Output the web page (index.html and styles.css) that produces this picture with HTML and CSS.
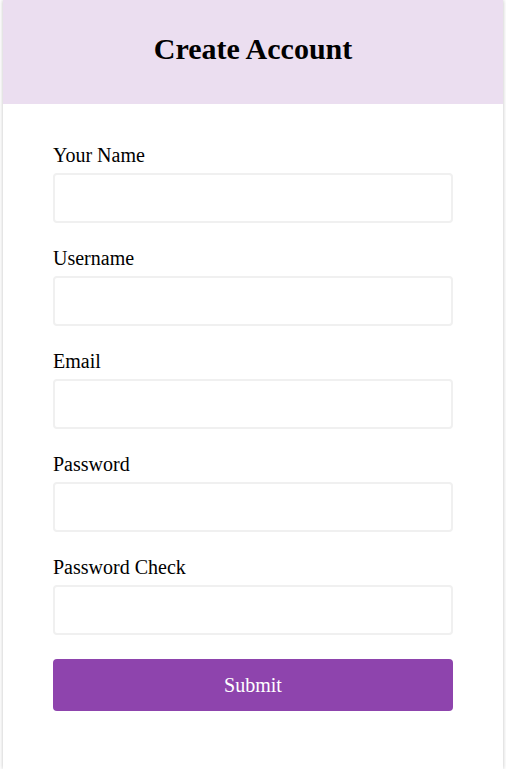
FILE: index.html
```html
<!DOCTYPE html>
<html>
<head>
<meta charset="utf-8">
<link rel="stylesheet" href="styles.css">
</head>
<body>
<div class="card">
  <div class="card-header">
    <h2 class="title">Create Account</h2>
  </div>
  <form class="form">
    <div class="field">
      <label class="label">Your Name</label>
      <input class="input" type="text">
    </div>
    <div class="field">
      <label class="label">Username</label>
      <input class="input" type="text">
    </div>
    <div class="field">
      <label class="label">Email</label>
      <input class="input" type="text">
    </div>
    <div class="field">
      <label class="label">Password</label>
      <input class="input" type="password">
    </div>
    <div class="field">
      <label class="label">Password Check</label>
      <input class="input" type="password">
    </div>
    <button class="submit" type="button">Submit</button>
  </form>
</div>
</body>
</html>
```
FILE: styles.css
```css
html, body {
  margin: 0;
  padding: 0;
  background: #ffffff;
  font-family: "Liberation Serif", "Times New Roman", serif;
}
.card {
  box-sizing: border-box;
  width: 500px;
  margin: 0 auto;
  background: #ffffff;
  box-shadow: 0 0 4px rgba(0, 0, 0, 0.25);
  min-height: 100vh;
}
.card-header {
  box-sizing: border-box;
  background: #ebdef0;
  height: 104px;
  padding-bottom: 6px;
  display: flex;
  align-items: center;
  justify-content: center;
}
.title {
  margin: 0;
  font-size: 30px;
  font-weight: bold;
  color: #000;
}
.form {
  padding: 40px 50px 40px;
  display: flex;
  flex-direction: column;
}
.field {
  display: flex;
  flex-direction: column;
  margin-bottom: 24px;
}
.label {
  font-size: 20px;
  line-height: 23px;
  color: #000;
  margin-bottom: 6px;
}
.input {
  box-sizing: border-box;
  width: 400px;
  height: 50px;
  border: 2px solid #f0f0f0;
  border-radius: 4px;
  font-family: inherit;
  font-size: 18px;
  padding: 0 10px;
  margin: 0;
}
.submit {
  width: 400px;
  height: 52px;
  border: none;
  border-radius: 4px;
  background: #8e44ad;
  color: #ffffff;
  font-family: "Liberation Serif", "Times New Roman", serif;
  font-size: 20px;
  margin: 0;
  cursor: pointer;
}
```
